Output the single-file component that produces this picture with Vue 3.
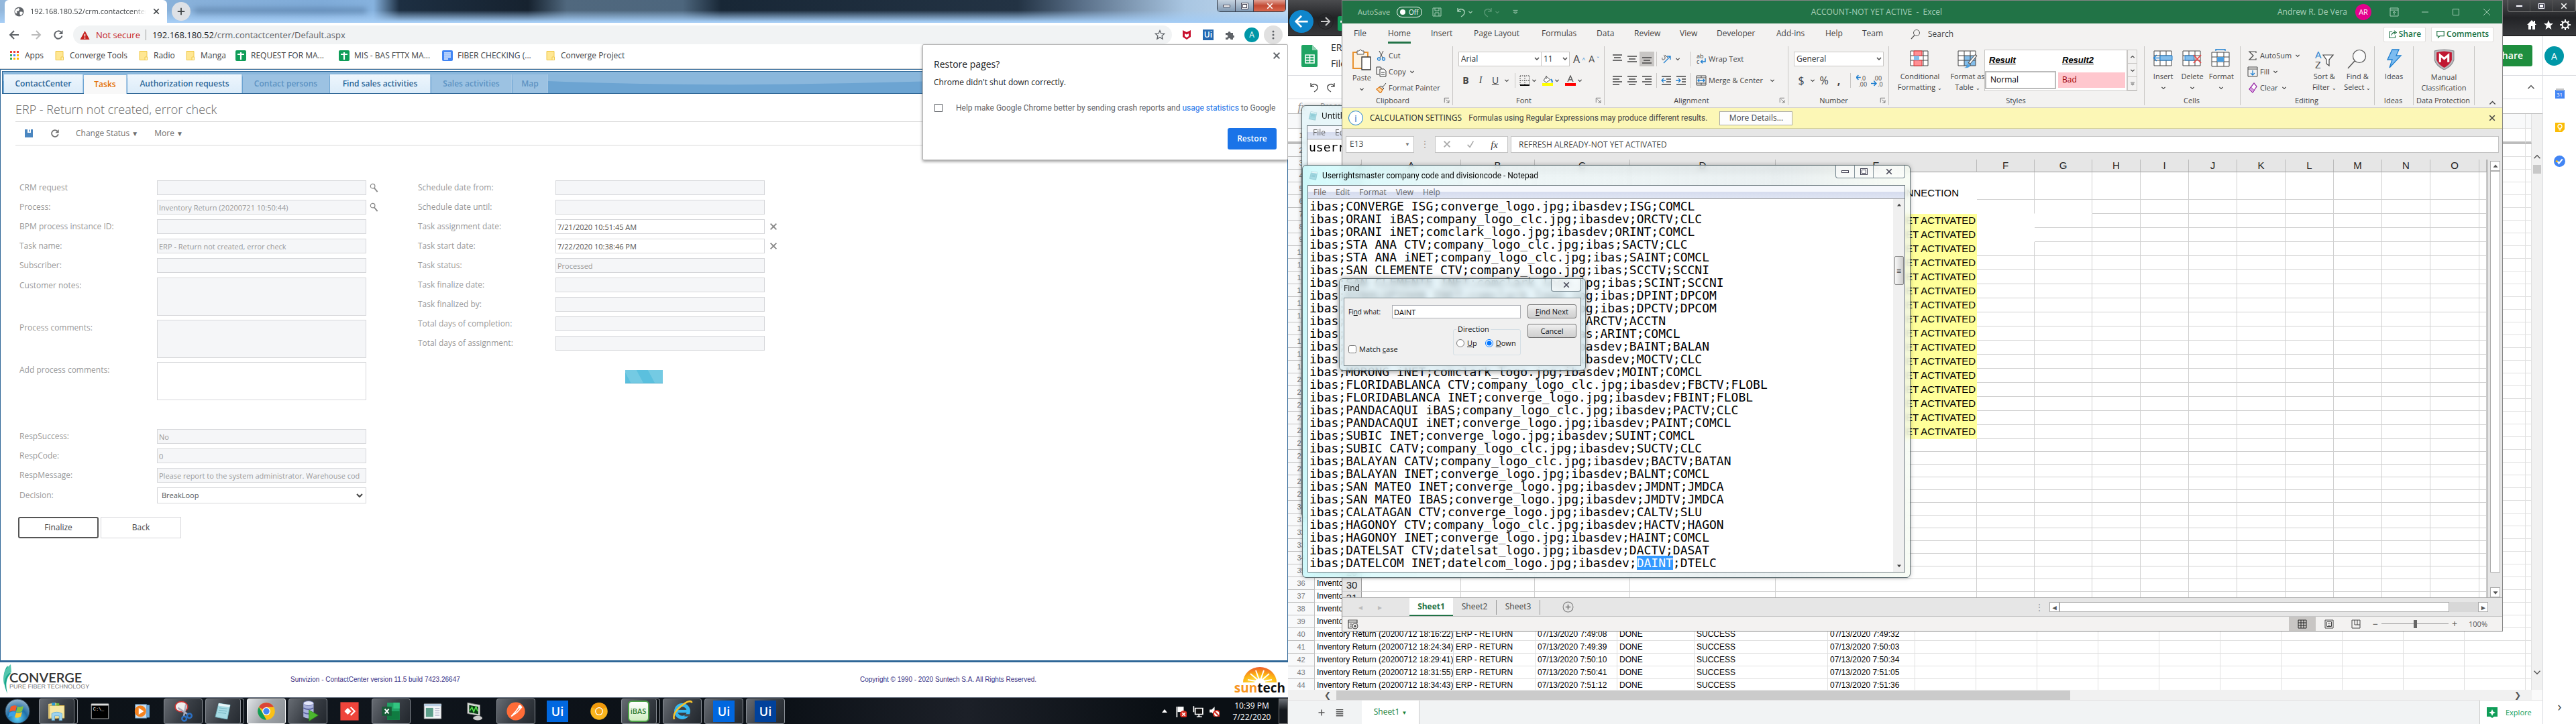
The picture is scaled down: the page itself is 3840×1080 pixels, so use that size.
<script setup>
import { h } from 'vue'

const icons = {
  globe: '<circle cx="8" cy="8" r="7.5" fill="#5f6368"/><path d="M3 4l4-2 2 2-2 3H4l1 3-2 1-2-3zM9 8l4 0 1 2-3 4-2-2z" fill="#fff"/>',
  x: '<path d="M3 3l10 10M13 3L3 13" stroke="currentColor" stroke-width="2.2" fill="none"/>',
  thinx: '<path d="M3 3l10 10M13 3L3 13" stroke="currentColor" stroke-width="1" fill="none"/>',
  plus: '<path d="M8 2v12M2 8h12" stroke="currentColor" stroke-width="2" fill="none"/>',
  back: '<path d="M15 8H2M8 2L2 8l6 6" stroke="currentColor" stroke-width="2" fill="none"/>',
  fwd: '<path d="M1 8h13M8 2l6 6-6 6" stroke="currentColor" stroke-width="2" fill="none"/>',
  reload: '<path d="M13.5 9.500A5.700 5.700 0 1 1 12 4" stroke="currentColor" stroke-width="2" fill="none"/><path d="M14.500 1v6h-6z" fill="currentColor"/>',
  warn: '<path d="M8 1l7.500 14H.5z" fill="#c5221f"/><path d="M8 6v4M8 11.500v2" stroke="#fff" stroke-width="1.600"/>',
  apps: '<g><path d="M1 1h3v3H1zM6 1h3v3H6zM11 1h3v3h-3z" fill="#ea4335"/><path d="M1 6h3v3H1z" fill="#34a853"/><path d="M6 6h3v3H6z" fill="#4285f4"/><path d="M11 6h3v3h-3zM6 11h3v3H6zM11 11h3v3h-3z" fill="#fbbc04"/><path d="M1 11h3v3H1z" fill="#34a853"/></g>',
  folder: '<path d="M2 1.500h11v13H2z" fill="#ffe793" stroke="#f0c94c"/><path d="M10 10h3.500v4.500H10z" fill="#fff0b5" stroke="#f0c94c"/>',
  gsheet: '<rect width="16" height="16" rx="2" fill="#0f9d58"/><path d="M3 6h10M8 3v11" stroke="#fff" stroke-width="2.200"/>',
  gdoc: '<rect width="16" height="16" rx="2" fill="#4285f4"/><path d="M3 4h10M3 7h10M3 10h10M3 13h6" stroke="#fff" stroke-width="1.500"/>',
  star: '<path d="M8 1.500l1.900 4.400 4.800.4-3.600 3.100 1.100 4.700L8 11.600l-4.200 2.500 1.100-4.700L1.300 6.300l4.800-.4z" fill="none" stroke="#5f6368" stroke-width="1.300"/>',
  mcafee: '<path d="M2 1l6 3 6-3v10l-6 4-6-4z" fill="#c8102e"/><path d="M5 6l3 1.500L11 6v4l-3 2-3-2z" fill="#fff"/>',
  puzzle: '<path d="M2 5h3.500a2 2 0 1 1 4 0H13v3.500a2 2 0 1 1 0 4V15H9.500a2 2 0 1 0-4 0H2v-3.500a2 2 0 1 0 0-3z" fill="#5f6368"/>',
  dots: '<g fill="#5f6368"><circle cx="8" cy="3" r="1.500"/><circle cx="8" cy="8" r="1.500"/><circle cx="8" cy="13" r="1.500"/></g>',
  save: '<path d="M2 2h12v12H2z" fill="#4a86c0"/><path d="M6 2h5v5H6z" fill="#fff"/><path d="M8.500 2.500h1.500v3H8.500z" fill="#4a86c0"/>',
  mag: '<circle cx="6" cy="5" r="3.500" fill="none" stroke="#888" stroke-width="1.300"/><path d="M8.500 8l5 6" stroke="#888" stroke-width="2"/>',
  orb: '<defs><radialGradient id="og" cx=".5" cy=".8" r=".8"><stop offset="0" stop-color="#5fd0f5"/><stop offset=".5" stop-color="#1e6fa8"/><stop offset="1" stop-color="#9ab6cc"/></radialGradient></defs><circle cx="20" cy="20" r="18" fill="url(#og)" stroke="#34495c"/><path d="M10 13q5-3 9-1l-2 8q-4-2-9 1z" fill="#f1592a"/><path d="M20 13q4 2 9-1l-2 8q-5 3-9 1z" fill="#7fc241"/><path d="M8 22q5-3 9-1l-2 7q-4-2-9 1z" fill="#3aa0e8"/><path d="M18 22q4 2 9-1l-2 7q-5 3-9 1z" fill="#fdc728"/>',
  explorer: '<path d="M6 7l12-2 4 2v26H6z" fill="#e9cf7a"/><path d="M8 10h26v22H8z" fill="#f7e7a3" stroke="#d0ac4a"/><path d="M12 5h6v5h-6z" fill="#2b9ad6"/><path d="M20 6h5v4h-5z" fill="#6cb33f"/><path d="M12 36V24q8-5 18 0v12h-5v-8h-8v8z" fill="#9ed3f0" stroke="#5fa8d0"/>',
  cmd: '<path d="M5 7h30v26H5z" fill="#000" stroke="#ccc"/><path d="M5 7h30v3H5z" fill="#ddd"/><text x="8" y="19" font-size="8" font-family="Liberation Mono" fill="#fff">C:\\_</text>',
  wmp: '<path d="M14 9h20v22H14z" fill="#6ea9d9"/><path d="M9 8h20v24H9z" fill="#c7dff2" stroke="#5c93c4"/><circle cx="18" cy="20" r="10" fill="#f5821f"/><path d="M15 14l9 6-9 6z" fill="#fff"/>',
  snip: '<ellipse cx="17" cy="12" rx="11" ry="9" fill="#eee" stroke="#c33" stroke-width="2"/><path d="M11 14l18 12M25 8l-4 22" stroke="#aab" stroke-width="3"/><circle cx="31" cy="28" r="4" fill="none" stroke="#2b6fc2" stroke-width="3"/><circle cx="22" cy="33" r="4" fill="none" stroke="#2b6fc2" stroke-width="3"/>',
  note: '<path d="M13 6l20 3-5 25-21-4z" fill="#a7dbe4" stroke="#6eaeb9"/><path d="M13 6l20 3-1 4-20-3z" fill="#e8f6f8"/><path d="M14 14l14 2M13 18l14 2M12 22l14 2" stroke="#69aebb"/>',
  chrome: '<circle cx="20" cy="20" r="15" fill="#fbc116"/><path d="M20 20L7 12.500A15 15 0 0 1 33 12.500H20z" fill="#db4437"/><path d="M7 12.500L14 24l6 11A15 15 0 0 1 7 12.500z" fill="#0f9d58"/><circle cx="20" cy="20" r="7" fill="#fff"/><circle cx="20" cy="20" r="5.500" fill="#4285f4"/>',
  db: '<path d="M12 6v24q9 5 18 0V6z" fill="#aab3dd"/><ellipse cx="21" cy="6" rx="9" ry="4" fill="#e3e7fa" stroke="#6b74ad"/><path d="M12 14q9 5 18 0M12 22q9 5 18 0" fill="none" stroke="#5a639f" stroke-width="2"/><path d="M22 18l16 9-16 10z" fill="#4cb82e" stroke="#2e8a18"/>',
  any: '<path d="M4 4h32v32H4z" fill="#ef443b"/><path d="M11 20l6-6 6 6-6 6z" fill="#fff"/><path d="M22 13l7 7-7 7" fill="none" stroke="#fff" stroke-width="2.500"/>',
  excel: '<path d="M13 5h22v30H13z" fill="#21a366"/><path d="M24 5h11v10H24z" fill="#33c481"/><path d="M13 20h22v15H13z" fill="#107c41"/><path d="M4 12h17v16H4z" fill="#185c37"/><path d="M9 16l7 8M16 16l-7 8" stroke="#fff" stroke-width="2.400"/>',
  app: '<path d="M5 7h30v26H5z" fill="#f4f6f8" stroke="#999"/><path d="M5 7h30v4H5z" fill="#b9cfe4"/><path d="M8 14h13v16H8z" fill="#5c9e8a"/><path d="M24 15h8M24 19h8M24 23h8M24 27h8" stroke="#88a"/>',
  monitor: '<path d="M8 5l22 4v19L8 24z" fill="#d8dcd8" stroke="#777"/><path d="M11 9l16 3v13l-16-3z" fill="#073b12"/><path d="M12 19l4-6 3 8 4-9 3 8" fill="none" stroke="#57e04d" stroke-width="2"/><ellipse cx="26" cy="32" rx="8" ry="4" fill="#ccc"/>',
  postman: '<circle cx="20" cy="20" r="16" fill="#ff6c37"/><path d="M12 29l8-9 7-10 3 3-8 9z" fill="none" stroke="#fff" stroke-width="2"/><circle cx="27" cy="12" r="3" fill="#fff"/>',
  canary: '<circle cx="20" cy="20" r="15" fill="#f9b51c"/><path d="M20 20L7 12.500A15 15 0 0 1 33 12.500z" fill="#f29a0c"/><circle cx="20" cy="20" r="7" fill="#fff"/><circle cx="20" cy="20" r="5.500" fill="#f2a516"/>',
  ie: '<circle cx="20" cy="20" r="11" fill="none" stroke="#35b6f0" stroke-width="6"/><path d="M10 20h21" stroke="#35b6f0" stroke-width="5"/><path d="M24 25h10v4H24z" fill="#45474d"/><path d="M6 34Q2 24 18 11T37 5" fill="none" stroke="#f7c32b" stroke-width="3"/>',
  cv: '<path d="M9 2Q-2 18 9 44Q4 22 14 14Z" fill="#18a88c"/><path d="M14 0Q0 10 4 30Q6 14 15 12Z" fill="#54c7ae"/>',
  sun: '<defs><radialGradient id="sg" cx=".5" cy="1" r="1"><stop offset="0" stop-color="#fff36b"/><stop offset=".5" stop-color="#fdb813"/><stop offset="1" stop-color="#ef5a28"/></radialGradient></defs><path d="M1 24A25 23 0 0 1 51 24Z" fill="url(#sg)"/><path d="M26 23L8 20M26 23L12 11M26 23L20 6M26 23L32 6M26 23L40 11M26 23L44 20" stroke="#fff" stroke-width="2"/><path d="M18 24a8 6 0 0 1 16 0z" fill="#fff"/>',
  flag: '<path d="M3 2v14" stroke="#fff" stroke-width="1.500"/><path d="M4 2h8v7H4z" fill="#fff"/><circle cx="12" cy="12" r="5" fill="#d82c20"/><path d="M10 10l4 4M14 10l-4 4" stroke="#fff" stroke-width="1.500"/>',
  net: '<path d="M5 4h10v8H5z" fill="#111" stroke="#fff" stroke-width="1.500"/><path d="M10 12v3M7 15.500h7M3 1v8" stroke="#fff" stroke-width="1.500"/>',
  vol: '<path d="M2 6h3l4-4v12l-4-4H2z" fill="#fff"/><circle cx="12" cy="12" r="4.500" fill="#fff" stroke="#d82c20" stroke-width="2"/><path d="M9 9l6 6" stroke="#d82c20" stroke-width="2"/>',
  caret: '<path d="M4.500 6.500L8 10l3.500-3.500" stroke="currentColor" stroke-width="1.600" fill="none"/>',
  up: '<path d="M2 11l6-6 6 6" stroke="currentColor" stroke-width="2" fill="none"/>',
  disk: '<path d="M2 2h12v12H2zM5 2v4h6V2M5 14V9h6v5" stroke="currentColor" fill="none"/>',
  undo: '<path d="M3 2v5h5M3 7q3-5 7-3t3 5q0 3-5 6" stroke="currentColor" stroke-width="1.400" fill="none"/>',
  redo: '<path d="M13 2v5H8M13 7q-3-5-7-3T3 9q0 3 5 6" stroke="currentColor" stroke-width="1.400" fill="none"/>',
  qat: '<path d="M4 5h8M5 8h6l-3 3z" stroke="currentColor" fill="none"/>',
  ribdisp: '<path d="M2 2h12v12H2zM2 5h12M8 12V7M6 9l2-2 2 2" stroke="currentColor" fill="none"/>',
  min: '<path d="M3 8h10" stroke="currentColor" fill="none"/>',
  max: '<path d="M3.500 3.500h9v9h-9z" stroke="currentColor" fill="none"/>',
  search: '<circle cx="10" cy="6" r="4.500" fill="none" stroke="#555"/><path d="M7 9.500L2 15" stroke="#555" stroke-width="1.300"/>',
  share: '<path d="M7 4H2v10h10v-4M6 10q0-5 6-5M10 2l4 3-4 3" stroke="#217346" stroke-width="1.300" fill="none"/>',
  comment: '<path d="M2 3h12v8H7l-3 3v-3H2z" stroke="#217346" stroke-width="1.300" fill="none"/>',
  paste: '<path d="M2 5h22v24H2z" fill="#fdf3e3" stroke="#e8912d" stroke-width="2"/><path d="M8 3h3q2-4 4 0h3v5H8z" fill="#fff" stroke="#555"/><path d="M15 12h13v19H15z" fill="#fff" stroke="#333" stroke-width="1.300"/>',
  cut: '<path d="M5 1l5 10M11 1L6 11" stroke="#444" fill="none"/><circle cx="4.500" cy="13" r="2" fill="none" stroke="#1e7fd0" stroke-width="1.300"/><circle cx="11.500" cy="13" r="2" fill="none" stroke="#1e7fd0" stroke-width="1.300"/>',
  copy: '<path d="M5 12H1V1h6l2 2" stroke="#333" fill="none"/><path d="M6 4h6l3 3v8H6zM8 9h5M8 12h5" stroke="#333" fill="#fff"/>',
  painter: '<path d="M15 1l-5 6M8 5l4 4-2 2-5-4z" stroke="#444" fill="#ddd"/><path d="M5 7l5 4-3 5-6-6z" fill="#fbd9a8" stroke="#e07b1a" stroke-width="1.300"/>',
  launch: '<path d="M3 12V3h9M6 6l6 6M12 7v5H7" stroke="#555" fill="none"/>',
  border: '<path d="M1 1h14v14H1zM8 1v14M1 8h14" stroke="#333" stroke-dasharray="1.500 1.500" fill="none"/><path d="M1 15h14" stroke="#000" stroke-width="2"/>',
  bucket: '<path d="M6 2l6 5-6 4-4-3zM6 1v5" stroke="#555" fill="#fff"/><path d="M13 6q3 4 1 5" stroke="#1e7fd0" stroke-width="2" fill="none"/><path d="M0 12h16v4H0z" fill="#ff0"/>',
  fontc: '<path d="M4 10L8 1l4 9M5.500 7h5" stroke="#555" stroke-width="1.300" fill="none"/><path d="M0 12h16v4H0z" fill="#f00"/>',
  alt: '<path d="M1 2h14M3 6h10M1 10h14" stroke="#444" stroke-width="1.300"/>',
  alm: '<path d="M1 4h14M3 8h10M1 12h14" stroke="#444" stroke-width="1.300"/>',
  alb: '<path d="M1 6h14M3 10h10M1 14h14" stroke="#444" stroke-width="1.300"/>',
  tl: '<path d="M1 2h14M1 6h10M1 10h14M1 14h10" stroke="#444" stroke-width="1.300"/>',
  tc: '<path d="M1 2h14M3 6h10M1 10h14M3 14h10" stroke="#444" stroke-width="1.300"/>',
  tr: '<path d="M1 2h14M5 6h10M1 10h14M5 14h10" stroke="#444" stroke-width="1.300"/>',
  orient: '<path d="M4 14L14 4M9 4h5v5" stroke="#1e7fd0" stroke-width="1.300" fill="none"/><path d="M2 6q-1 4 2 3t2-4-2-3M6 2l4 4" stroke="#555" fill="none"/>',
  ind: '<path d="M1 2h14M8 6h7M8 10h7M1 14h14" stroke="#444" stroke-width="1.300"/><path d="M7 8H1M4 5L1 8l3 3" stroke="#1e7fd0" stroke-width="1.300" fill="none"/>',
  ind2: '<path d="M1 2h14M9 6h6M9 10h6M1 14h14" stroke="#444" stroke-width="1.300"/><path d="M0 8h7M4 5l3 3-3 3" stroke="#1e7fd0" stroke-width="1.300" fill="none"/>',
  wrap: '<text x="1" y="7" font-size="9" font-family="Open Sans" fill="#444">ab</text><text x="1" y="15" font-size="9" font-family="Open Sans" fill="#444">c</text><path d="M14 7v5H8M10 9.500L7.500 12l2.500 2.500" stroke="#1e7fd0" stroke-width="1.500" fill="none"/>',
  merge: '<path d="M1 1h14v14H1zM1 4h14M1 12h14M8 1v3M8 12v3" stroke="#444" fill="none"/><path d="M3 8h10M5 6L3 8l2 2M11 6l2 2-2 2" stroke="#1e7fd0" stroke-width="1.400" fill="none"/>',
  dec: '<text x="6" y="8" font-size="8" font-family="Open Sans" fill="#444">.0</text><text x="3" y="16" font-size="8" font-family="Open Sans" fill="#444">.00</text><path d="M6 4H0M3 1L0 4l3 3" stroke="#1e7fd0" stroke-width="1.400" fill="none"/>',
  dec2: '<text x="3" y="8" font-size="8" font-family="Open Sans" fill="#444">.00</text><text x="9" y="16" font-size="8" font-family="Open Sans" fill="#444">.0</text><path d="M0 12h7M4 9l3 3-3 3" stroke="#1e7fd0" stroke-width="1.400" fill="none"/>',
  cond: '<path d="M1 3h26v22H1zM1 10h26M1 17h26M9 3v22M20 3v22" stroke="#444" fill="#fff"/><path d="M6 3h12v7H6zM6 17h12v8H6z" fill="#ff8f94" stroke="#d33"/><path d="M6 10h8v7H6z" fill="#83bdea"/>',
  ftab: '<path d="M1 3h26v22H1z" fill="#fff"/><path d="M10 10h17v15H10z" fill="#83bdea"/><path d="M1 3h26v22H1zM1 10h26M1 17h26M10 3v22M19 3v22" stroke="#444" fill="none"/><path d="M28 9L17 22" stroke="#555" stroke-width="4"/><path d="M27 10L18 21" stroke="#fff" stroke-width="2"/><path d="M9 28q5 0 5-5l5 1q0 5-10 4z" fill="#4b9fe0"/>',
  cins: '<path d="M1 3h26v22H1zM1 10h26M1 17h26M10 3v22M19 3v22" stroke="#444" fill="#fff"/><path d="M10 10h18v7H10z" fill="#83bdea" stroke="#1e7fd0"/><path d="M9 13.500H0M5 9l-4.500 4.500L5 18" stroke="#1e7fd0" stroke-width="1.500" fill="none"/>',
  cdel: '<path d="M1 3h26v22H1zM1 10h26M1 17h26M10 3v22M19 3v22" stroke="#444" fill="#fff"/><path d="M4 10h13v7H4z" fill="#83bdea" stroke="#1e7fd0"/><path d="M17 9l11 12M28 9L17 21" stroke="#e8484a" stroke-width="1.800"/>',
  cfmt: '<path d="M1 5h26v21H1zM1 12h26M1 19h26M9 5v21M19 5v21" stroke="#444" fill="#fff"/><path d="M9 12h10v7H9z" fill="#4b9fe0"/><path d="M7 1h14M7 0v3M21 0v3" stroke="#1e7fd0" stroke-width="1.300"/>',
  sigma: '<path d="M13 4V2H3l6 6-6 6h10v-2" stroke="#444" stroke-width="1.200" fill="none"/>',
  fill: '<path d="M1 1h14v14H1zM1 4h14" stroke="#444" fill="none"/><path d="M8 6v7M5 10l3 3 3-3" stroke="#1e7fd0" stroke-width="1.300" fill="none"/>',
  clear: '<path d="M10 1l4 5-6 9-5-5z" fill="#fff" stroke="#9b30a8" stroke-width="1.300"/><path d="M5.500 7l5 5-2.500 3-5-5z" fill="#d9a0e0" stroke="#9b30a8"/>',
  sort: '<text x="1" y="14" font-size="15" font-family="Open Sans" fill="#1e7fd0">A</text><text x="1" y="29" font-size="15" font-family="Open Sans" fill="#444">Z</text><path d="M13 9h15l-6 7v9l-4-3v-6z" fill="#fff" stroke="#444" stroke-width="1.200"/>',
  find: '<circle cx="18" cy="11" r="9.500" fill="#fafafa" stroke="#555" stroke-width="1.200"/><path d="M11 18L1 29" stroke="#555" stroke-width="1.500"/>',
  idea: '<path d="M12 1h10l-4 9h7L8 28l4-12H5z" fill="#7dbcf0" stroke="#1e7fd0" stroke-width="1.300"/>',
  shield: '<path d="M1 3q14-4 28 0v13q-3 9-14 14Q4 25 1 16z" fill="#b8b8bc" stroke="#8a8a8e"/><path d="M4 5q11-3 22 0v11q-3 7-11 11Q7 23 4 16z" fill="#c01832"/><path d="M9 19V9l6 5 6-5v10" fill="none" stroke="#fff" stroke-width="3"/>',
  fx: '<text x="2" y="13" font-size="14" font-style="italic" font-family="Liberation Serif" fill="currentColor">fx</text>',
  check: '<path d="M3 9l4 4 6-10" stroke="currentColor" stroke-width="1.800" fill="none"/>',
  addc: '<circle cx="8" cy="8" r="7" fill="none" stroke="#777"/><path d="M8 4.500v7M4.500 8h7" stroke="#777" stroke-width="1.500"/>',
  rec: '<path d="M1 2h13v5M1 2v12h6M1 5h13M3 8h4M3 11h3" stroke="#444" stroke-width="1.200" fill="none"/><circle cx="11" cy="11" r="4" fill="none" stroke="#444"/><circle cx="11" cy="11" r="1.700" fill="#444"/>',
  vgrid: '<path d="M2 2h12v12H2zM6 2v12M10 2v12M2 6h12M2 10h12" stroke="#222" fill="none"/>',
  vpage: '<path d="M2 2h12v12H2zM4.500 4.500h7v7h-7zM6 6.500h4M6 9.500h4" stroke="#444" fill="none"/>',
  vbreak: '<path d="M2 2h12v12H2zM6 2v7h8M10 2v7" stroke="#444" fill="none"/>',
  tri: '<path d="M4 10l4-5 4 5z" fill="currentColor"/>',
  home: '<path d="M8 1L1 8h2v7h4v-5h2v5h4V8h2l-2-2V2h-2v2z" fill="#fff"/>',
  fstar: '<path d="M8 1l2 5h5l-4 3.500 1.500 5.500L8 12l-4.500 3L5 9.500 1 6h5z" fill="#fff"/>',
  gear: '<circle cx="8" cy="8" r="4.500" fill="none" stroke="#fff" stroke-width="2"/><path d="M8 0v3M8 13v3M0 8h3M13 8h3M2.500 2.500l2 2M11.500 11.500l2 2M13.500 2.500l-2 2M4.500 11.500l-2 2" stroke="#fff" stroke-width="2"/>',
  sheets: '<path d="M2 0h14l8 8v23q0 2-2 2H2q-2 0-2-2V2q0-2 2-2z" fill="#1fa463"/><path d="M16 0l8 8h-8z" fill="#8ed1b1"/><path d="M6 15h13v12H6zM6 19h13M6 23h13M12.500 15v12" fill="none" stroke="#fff" stroke-width="1.600"/>',
  cal: '<path d="M1 2h14v13H1z" fill="#4285f4"/><path d="M2 0h12v3H2z" fill="#c6c6c6"/><text x="3" y="12" font-size="8" font-family="Open Sans" fill="#fff">31</text>',
  keep: '<path d="M1 1h14v10l-4 4H1z" fill="#fbbc04"/><circle cx="8" cy="6.500" r="3" fill="none" stroke="#fff" stroke-width="1.300"/><path d="M6.500 11h3v1.500h-3z" fill="#fff"/>',
  task: '<circle cx="8" cy="8" r="8" fill="#4285f4"/><path d="M5 8l2 3 5-6" fill="none" stroke="#fff" stroke-width="2"/><circle cx="4" cy="8" r="1.500" fill="#fbbc04"/>',
  explore: '<path d="M0 0h16v14h-5l-3 2-3-2H0z" fill="#0f9d58"/><path d="M8 3l1.500 3.500L13 8 9.500 9.500 8 13 6.500 9.500 3 8l3.500-1.500z" fill="#fff"/>',
  list: '<path d="M2 3h12M2 6.500h12M2 10h12M2 13.500h12" stroke="#555" stroke-width="1.600"/>',
}
const Ico = (p) => h('svg', {
  width: p.w || 16, height: p.t || p.w || 16,
  viewBox: p.vb || '0 0 16 16', 'aria-hidden': 'true',
  innerHTML: icons[p.n],
})

const bookmarks = [
  ['folder', 'Converge Tools', 125], ['folder', 'Radio', 70], ['folder', 'Manga', 75],
  ['gsheet', 'REQUEST FOR MA...', 154], ['gsheet', 'MIS - BAS FTTX MA...', 154],
  ['gdoc', 'FIBER CHECKING (...', 154], ['folder', 'Converge Project', 140],
]
const crmTabs = [
  ['ContactCenter', 118, ''], ['Tasks', 64, 'active'], ['Authorization requests', 171, ''],
  ['Contact persons', 129, 'off'], ['Find sales activities', 150, ''], ['Sales activities', 120, 'off'], ['Map', 53, 'off'],
]
const leftFields = [
  { l: 'CRM request', v: '', look: true }, { l: 'Process:', v: 'Inventory Return (20200721 10:50:44)', look: true },
  { l: 'BPM process instance ID:', v: '' }, { l: 'Task name:', v: 'ERP - Return not created, error check' }, { l: 'Subscriber:', v: '' },
]
const notes = [['Customer notes:', true], ['Process comments:', true], ['Add process comments:', false]]
const resp = [['RespSuccess:', 'No'], ['RespCode:', '0'], ['RespMessage:', 'Please report to the system administrator. Warehouse cod']]
const rightFields = [
  { l: 'Schedule date from:', v: '' }, { l: 'Schedule date until:', v: '' },
  { l: 'Task assignment date:', v: '7/21/2020 10:51:45 AM', edit: true }, { l: 'Task start date:', v: '7/22/2020 10:38:46 PM', edit: true },
  { l: 'Task status:', v: 'Processed' }, { l: 'Task finalize date:', v: '' }, { l: 'Task finalized by:', v: '' },
  { l: 'Total days of completion:', v: '' }, { l: 'Total days of assignment:', v: '' },
]
const tasks = [
  ['explorer', 'stack'], ['cmd', ''], ['wmp', ''], ['snip', 'open'], ['note', 'stack'], ['chrome', 'open front'],
  ['db', 'open'], ['any', ''], ['excel', 'open'], ['app', ''], ['monitor', ''], ['postman', 'open'], ['ui', ''],
  ['canary', ''], ['ibas', 'stack'], ['ie', 'open'], ['ui', 'open'], ['ui2', 'open'],
]
const ribbonTabs = [['File', 51], ['Home', 64], ['Insert', 64], ['Page Layout', 101], ['Formulas', 82], ['Data', 56], ['Review', 68], ['View', 55], ['Developer', 89], ['Add-ins', 73], ['Help', 55], ['Team', 72]]
const cols = [['A', 148], ['B', 110], ['C', 142], ['D', 217], ['E', 300], ['F', 86], ['G', 86], ['H', 72], ['I', 72], ['J', 72], ['K', 72], ['L', 72], ['M', 72], ['N', 72], ['O', 73]]
const xlRows = Array.from({ length: 31 }, (_, i) => i + 1)
const sheetCols = [207, 122, 122, 115, 199, 130, 91, 91, 91, 91, 91, 91, 91, 91, 91, 91]
const stamps = {
  35: ['18:01:10', '7:47:02', '7:47:25'], 36: ['18:03:14', '7:47:31', '7:47:50'], 37: ['18:06:35', '7:47:56', '7:48:12'],
  38: ['18:09:51', '7:48:20', '7:48:41'], 39: ['18:12:02', '7:48:47', '7:49:02'], 40: ['18:16:22', '7:49:08', '7:49:32'],
  41: ['18:24:34', '7:49:39', '7:50:03'], 42: ['18:29:41', '7:50:10', '7:50:34'], 43: ['18:31:55', '7:50:41', '7:51:05'], 44: ['18:34:43', '7:51:12', '7:51:36'],
}
const sheetRows = Array.from({ length: 43 }, (_, i) => {
  const n = i + 2
  const s = stamps[n]
  return { n, c: s ? [`Inventory Return (20200712 ${s[0]})`, 'ERP - RETURN', `07/13/2020 ${s[1]}`, 'DONE', 'SUCCESS', `07/13/2020 ${s[2]}`] : ['', '', '', '', '', ''] }
})
const lines = `CONVERGE ISG;converge_logo.jpg;ibasdev;ISG;COMCL
ORANI iBAS;company_logo_clc.jpg;ibasdev;ORCTV;CLC
ORANI iNET;comclark_logo.jpg;ibasdev;ORINT;COMCL
STA ANA CTV;company_logo_clc.jpg;ibas;SACTV;CLC
STA ANA iNET;company_logo_clc.jpg;ibas;SAINT;COMCL
SAN CLEMENTE CTV;company_logo.jpg;ibas;SCCTV;SCCNI
SAN CLEMENTE INET;comclark_logo.jpg;ibas;SCINT;SCCNI
DINALUPIHAN INET;comclark_logo.jpg;ibas;DPINT;DPCOM
DINALUPIHAN iBAS;comclark_logo.jpg;ibas;DPCTV;DPCOM
ARAYAT CTV;company_logo.jpg;ibas;ARCTV;ACCTN
ARAYAT INET;comclark_logo.jpg;ibas;ARINT;COMCL
BALANGA INET;comclark_logo.jpg;ibasdev;BAINT;BALAN
MORONG CTV;company_logo_clc.jpg;ibasdev;MOCTV;CLC
MORONG iNET;comclark_logo.jpg;ibasdev;MOINT;COMCL
FLORIDABLANCA CTV;company_logo_clc.jpg;ibasdev;FBCTV;FLOBL
FLORIDABLANCA INET;converge_logo.jpg;ibasdev;FBINT;FLOBL
PANDACAQUI iBAS;company_logo_clc.jpg;ibasdev;PACTV;CLC
PANDACAQUI iNET;converge_logo.jpg;ibasdev;PAINT;COMCL
SUBIC INET;converge_logo.jpg;ibasdev;SUINT;COMCL
SUBIC CATV;company_logo_clc.jpg;ibasdev;SUCTV;CLC
BALAYAN CATV;company_logo_clc.jpg;ibasdev;BACTV;BATAN
BALAYAN INET;converge_logo.jpg;ibasdev;BALNT;COMCL
SAN MATEO INET;converge_logo.jpg;ibasdev;JMDNT;JMDCA
SAN MATEO IBAS;converge_logo.jpg;ibasdev;JMDTV;JMDCA
CALATAGAN CTV;converge_logo.jpg;ibasdev;CALTV;SLU
HAGONOY CTV;company_logo_clc.jpg;ibasdev;HACTV;HAGON
HAGONOY INET;converge_logo.jpg;ibasdev;HAINT;COMCL
DATELSAT CTV;datelsat_logo.jpg;ibasdev;DACTV;DASAT`.split('\n')
</script>

<template>
  <div class="desk">
    <section class="screen left">
      <div class="tabstrip">
        <div class="ctab"><Ico n="globe" :w="15" /><span>192.168.180.52/crm.contactcenter</span><button aria-label="Close tab"><Ico n="x" :w="12" /></button></div>
        <button class="newtab" aria-label="New tab"><Ico n="plus" :w="14" /></button>
        <i class="smudge"></i>
        <div class="wctl"><button aria-label="Minimize"><i class="wmin"></i></button><button aria-label="Restore down"><i class="wmax"></i></button><button class="red" aria-label="Close"><Ico n="x" :w="12" /></button></div>
      </div>
      <div class="toolbar">
        <button aria-label="Back"><Ico n="back" /></button><button class="dim" aria-label="Forward"><Ico n="fwd" /></button><button aria-label="Reload"><Ico n="reload" /></button>
        <div class="omni"><Ico n="warn" :w="15" /><span class="ns">Not secure</span><span class="url"><b>192.168.180.52</b>/crm.contactcenter/Default.aspx</span><Ico n="star" /></div>
        <div class="exts"><Ico n="mcafee" /><span class="uib">Ui</span><Ico n="puzzle" /><span class="av">A</span><button class="menu" aria-label="Menu"><Ico n="dots" /></button></div>
      </div>
      <nav class="marks">
        <a href="#" class="apps"><Ico n="apps" />Apps</a>
        <a v-for="b in bookmarks" :key="b[1]" href="#" :style="{ width: b[2] + 'px' }"><Ico :n="b[0]" />{{ b[1] }}</a>
      </nav>
      <main class="crm">
        <nav class="crmtabs">
          <svg class="wave" viewBox="0 0 1900 32" preserveAspectRatio="none" aria-hidden="true"><path d="M0 14Q500 0 760 12T1300 16T1900 10V32H0Z" fill="#6ca4d2" /></svg>
          <a v-for="t in crmTabs" :key="t[0]" href="#" :class="t[2]" :style="{ width: t[1] + 'px' }">{{ t[0] }}</a>
        </nav>
        <h1>ERP - Return not created, error check</h1>
        <div class="crmbar"><button aria-label="Save"><Ico n="save" /></button><button aria-label="Refresh"><Ico n="reload" :w="14" /></button><button>Change Status <small>▼</small></button><button>More <small>▼</small></button></div>
        <form class="form" @submit.prevent>
          <div class="fcol">
            <div v-for="(f, i) in leftFields" :key="f.l" class="fr"><label :for="'l' + i">{{ f.l }}</label><input :id="'l' + i" :value="f.v" readonly><Ico v-if="f.look" n="mag" :w="15" /></div>
            <div v-for="(f, i) in notes" :key="f[0]" class="fr tall"><label :for="'n' + i">{{ f[0] }}</label><textarea :id="'n' + i" :class="{ edit: !f[1] }"></textarea></div>
            <div v-for="(f, i) in resp" :key="f[0]" class="fr" :class="{ first: i === 0 }"><label :for="'r' + i">{{ f[0] }}</label><input :id="'r' + i" :value="f[1]" readonly></div>
            <div class="fr"><label for="dec">Decision:</label><select id="dec"><option>BreakLoop</option></select></div>
            <div class="acts"><button class="def">Finalize</button><button>Back</button></div>
          </div>
          <div class="fcol second">
            <div v-for="(f, i) in rightFields" :key="f.l" class="fr"><label :for="'s' + i">{{ f.l }}</label><input :id="'s' + i" :value="f.v" :class="{ edit: f.edit }" readonly><button v-if="f.edit" class="clr" type="button" aria-label="Clear"><Ico n="x" :w="14" /></button></div>
            <div class="loader"></div>
          </div>
        </form>
      </main>
      <footer class="foot">
        <div class="cv"><Ico n="cv" :w="16" :t="46" vb="0 0 16 46" /><div><b>CONVERGE</b><small>PURE FIBER TECHNOLOGY</small></div></div>
        <span class="ver">Sunvizion - ContactCenter version 11.5 build 7423.26647</span>
        <span class="cpy">Copyright © 1990 - 2020 Suntech S.A. All Rights Reserved.</span>
        <div class="sun"><Ico n="sun" :w="52" :t="24" vb="0 0 52 24" /><b><i>sun</i>tech</b></div>
      </footer>
      <div class="taskbar">
        <button class="orb" aria-label="Start"><Ico n="orb" :w="40" vb="0 0 40 40" /></button>
        <button v-for="(t, i) in tasks" :key="i" class="tb" :class="t[1]" :aria-label="t[0]">
          <span v-if="t[0] === 'ui' || t[0] === 'ui2'" class="uibig" :class="t[0]">Ui</span>
          <span v-else-if="t[0] === 'ibas'" class="ibas">iBAS</span>
          <Ico v-else :n="t[0]" :w="34" vb="0 0 40 40" />
        </button>
        <div class="tray"><Ico n="tri" /><Ico n="flag" :w="18" /><Ico n="net" :w="18" /><Ico n="vol" :w="17" /><div class="clock">10:39 PM<br>7/22/2020</div><i class="peek"></i></div>
      </div>
      <aside class="restore">
        <button class="rx" aria-label="Dismiss"><Ico n="x" :w="14" /></button>
        <h2>Restore pages?</h2>
        <p>Chrome didn't shut down correctly.</p>
        <label><input type="checkbox"><span>Help make Google Chrome better by sending crash reports and <a href="#">usage statistics</a> to Google</span></label>
        <button class="rb">Restore</button>
      </aside>
    </section>

    <section class="screen right">
      <div class="iebar"><button class="ieb" aria-label="Back"><Ico n="back" :w="22" /></button><button class="ief" aria-label="Forward"><Ico n="fwd" /></button><Ico n="gsheet" :w="22" />
        <div class="ier"><div class="iew"><button aria-label="Minimize"><i class="wmin"></i></button><button aria-label="Restore"><i class="wmax"></i></button><button aria-label="Close"><Ico n="x" :w="12" /></button></div><div class="iei"><Ico n="home" /><Ico n="fstar" /><Ico n="gear" /></div></div>
      </div>
      <div class="docs">
        <div class="docmain">
          <header class="dochead"><Ico n="sheets" :w="24" :t="33" vb="0 0 24 33" /><div class="dt"><span>ERP</span><a href="#">File</a></div><button class="dshare">Share</button><span class="av big">A</span></header>
          <div class="doctools"><Ico n="undo" /><Ico n="redo" /><Ico n="up" :w="12" class="end" /></div>
          <div class="docfx"><Ico n="fx" :w="20" /><span>Process</span></div>
          <div class="docgrid">
            <div class="gwrap">
              <table>
                <colgroup><col style="width: 40px"><col v-for="(w, i) in sheetCols" :key="i" :style="{ width: w + 'px' }"><col></colgroup>
                <thead><tr><th></th><td v-for="i in 17" :key="i"></td></tr><tr class="frz"><th>1</th><td v-for="i in 17" :key="i"></td></tr></thead>
                <tbody><tr v-for="r in sheetRows" :key="r.n"><th>{{ r.n }}</th><td v-for="(c, i) in r.c" :key="i">{{ c }}</td><td v-for="i in 11" :key="'e' + i"></td></tr></tbody>
              </table>
            </div>
            <div class="vs"><Ico n="up" :w="12" /><i></i><Ico n="up" :w="12" class="flip" /></div>
          </div>
          <div class="hs"><span class="chev">❮</span><i></i><span class="chev r">❯</span></div>
          <div class="docfoot"><Ico n="plus" :w="12" /><Ico n="list" :w="14" /><a href="#">Sheet1 <small>▼</small></a><button class="expl"><Ico n="explore" />Explore</button></div>
        </div>
        <div class="side"><Ico n="cal" /><Ico n="keep" /><Ico n="task" :w="17" /><span>›</span></div>
      </div>

      <div class="np under"><div class="npt"><Ico n="note" :w="18" vb="0 0 40 40" /><span>Untitled - Notepad</span></div>
        <div class="npin"><div class="npm"><span>File</span><span>Edit</span></div><div class="nptext">userrightsmaster</div></div></div>

      <div class="xl">
        <header class="xlt">
          <span class="as">AutoSave</span><label class="tog"><input type="checkbox" aria-label="AutoSave"><i></i>Off</label>
          <Ico n="disk" /><span class="pair"><Ico n="undo" /><Ico n="caret" :w="12" /></span><span class="pair faint"><Ico n="redo" /><Ico n="caret" :w="12" /></span><Ico n="qat" :w="14" />
          <span class="ttl">ACCOUNT-NOT YET ACTIVE &nbsp;-&nbsp; Excel</span>
          <div class="xlu"><span>Andrew R. De Vera</span><b>AR</b><Ico n="ribdisp" /><Ico n="min" /><Ico n="max" /><Ico n="thinx" /></div>
        </header>
        <nav class="xltabs">
          <a v-for="t in ribbonTabs" :key="t[0]" href="#" :class="{ on: t[0] === 'Home' }" :style="{ width: t[1] + 'px' }"><span>{{ t[0] }}</span></a>
          <Ico n="search" /><span class="sr">Search</span>
          <div class="sc"><button><Ico n="share" :w="14" />Share</button><button><Ico n="comment" :w="14" />Comments</button></div>
        </nav>
        <div class="rib">
          <div class="g clip"><div class="body"><button class="bigb"><Ico n="paste" :w="30" :t="32" vb="0 0 30 32" /><span>Paste</span><Ico n="caret" :w="12" /></button>
            <div class="stk"><button><Ico n="cut" />Cut</button><button><Ico n="copy" />Copy <Ico n="caret" :w="12" /></button><button><Ico n="painter" />Format Painter</button></div></div>
            <div class="gl"><span>Clipboard</span><Ico n="launch" :w="12" /></div></div>
          <div class="g font"><div class="body colm">
            <div class="row"><select aria-label="Font"><option>Arial</option></select><select aria-label="Size" class="sz"><option>11</option></select><button class="big1">A<sup>^</sup></button><button class="big2">A<sup>ˇ</sup></button></div>
            <div class="row"><button class="tx"><b>B</b></button><button class="tx"><i class="se">I</i></button><button class="tx"><u>U</u></button><Ico n="caret" :w="12" /><i class="sep"></i><Ico n="border" /><Ico n="caret" :w="12" /><i class="gap"></i><Ico n="bucket" /><Ico n="caret" :w="12" /><i class="gap"></i><Ico n="fontc" /><Ico n="caret" :w="12" /></div></div>
            <div class="gl"><span>Font</span><Ico n="launch" :w="12" /></div></div>
          <div class="g align"><div class="body colm">
            <div class="row"><span class="ib"><Ico n="alt" /></span><span class="ib"><Ico n="alm" /></span><span class="ib hi"><Ico n="alb" /></span><i class="sep"></i><span class="ib"><Ico n="orient" /></span><Ico n="caret" :w="12" /><i class="sep far"></i><button><Ico n="wrap" />Wrap Text</button></div>
            <div class="row"><span class="ib"><Ico n="tl" /></span><span class="ib"><Ico n="tc" /></span><span class="ib"><Ico n="tr" /></span><i class="sep"></i><span class="ib"><Ico n="ind" /></span><span class="ib"><Ico n="ind2" /></span><i class="sep"></i><button><Ico n="merge" />Merge &amp; Center</button><Ico n="caret" :w="12" class="mc" /></div></div>
            <div class="gl"><span>Alignment</span><Ico n="launch" :w="12" /></div></div>
          <div class="g num"><div class="body colm">
            <div class="row"><select aria-label="Number format"><option>General</option></select></div>
            <div class="row"><span class="ib dl">$</span><Ico n="caret" :w="12" /><span class="ib dl">%</span><span class="ib dl"><b>,</b></span><i class="sep"></i><span class="ib"><Ico n="dec" :w="18" /></span><span class="ib"><Ico n="dec2" :w="18" /></span></div></div>
            <div class="gl"><span>Number</span><Ico n="launch" :w="12" /></div></div>
          <div class="g styl"><div class="body"><button class="bigb wide"><Ico n="cond" :w="30" vb="0 0 30 30" /><span>Conditional<br>Formatting <small>⌄</small></span></button><button class="bigb wide2"><Ico n="ftab" :w="30" vb="0 0 30 30" /><span>Format as<br>Table <small>⌄</small></span></button>
            <div class="gal"><span class="res">Result</span><span class="res">Result2</span><span class="nor">Normal</span><span class="bad">Bad</span></div><div class="gsc"><i><Ico n="caret" :w="12" class="flip" /></i><i><Ico n="caret" :w="12" /></i><i><Ico n="qat" :w="12" /></i></div></div>
            <div class="gl"><span>Styles</span></div></div>
          <div class="g cell"><div class="body"><button class="bigb"><Ico n="cins" :w="30" vb="0 0 30 30" /><span>Insert</span><Ico n="caret" :w="12" /></button><button class="bigb"><Ico n="cdel" :w="30" vb="0 0 30 30" /><span>Delete</span><Ico n="caret" :w="12" /></button><button class="bigb"><Ico n="cfmt" :w="30" vb="0 0 30 30" /><span>Format</span><Ico n="caret" :w="12" /></button></div>
            <div class="gl"><span>Cells</span></div></div>
          <div class="g edit"><div class="body"><div class="stk"><button><Ico n="sigma" />AutoSum <Ico n="caret" :w="12" /></button><button><Ico n="fill" />Fill<Ico n="caret" :w="12" /></button><button><Ico n="clear" />Clear<Ico n="caret" :w="12" /></button></div>
            <button class="bigb"><Ico n="sort" :w="30" vb="0 0 30 30" /><span>Sort &amp;<br>Filter <small>⌄</small></span></button><button class="bigb"><Ico n="find" :w="30" vb="0 0 30 30" /><span>Find &amp;<br>Select <small>⌄</small></span></button></div>
            <div class="gl"><span>Editing</span></div></div>
          <div class="g idea"><div class="body"><button class="bigb"><Ico n="idea" :w="30" vb="0 0 30 30" /><span>Ideas</span></button></div><div class="gl"><span>Ideas</span></div></div>
          <div class="g prot"><div class="body"><button class="bigb"><Ico n="shield" :w="31" vb="0 0 30 30" /><span>Manual<br>Classification</span></button></div><div class="gl"><span>Data Protection</span></div></div>
          <Ico n="up" :w="11" class="coll" />
        </div>
        <div class="msg"><span class="info">i</span><b>CALCULATION SETTINGS</b><span class="expr">Formulas using Regular Expressions may produce different results.</span><button>More Details...</button><Ico n="x" :w="12" class="end" /></div>
        <div class="fbar"><div class="nm"><span>E13</span><small>▼</small></div><span class="vd">⋮</span><div class="fxs"><Ico n="x" :w="14" /><Ico n="check" :w="14" /><Ico n="fx" :w="17" /></div><input aria-label="Formula" value="REFRESH ALREADY-NOT YET ACTIVATED"></div>
        <div class="xg">
          <div class="xw">
            <table>
              <colgroup><col style="width: 29px"><col v-for="c in cols" :key="c[0]" :style="{ width: c[1] + 'px' }"><col></colgroup>
              <thead><tr><th class="corner">◢</th><th v-for="c in cols" :key="c[0]">{{ c[0] }}</th><th></th></tr></thead>
              <tbody><tr v-for="r in xlRows" :key="r" :class="{ r1: r === 1, r2: r === 2, yel: r > 2 && r < 19, sp: r === 3 || r === 4 }"><th>{{ r }}</th>
                <td v-for="c in cols" :key="c[0]" :class="'c' + c[0]"><template v-if="c[0] === 'E' && r === 1">CONNECTION</template><template v-if="c[0] === 'E' && r > 2 && r < 19">REFRESH ALREADY-NOT YET ACTIVATED</template></td><td></td></tr></tbody>
            </table>
          </div>
          <div class="xvs"><b><Ico n="tri" :w="14" /></b><i></i><b><Ico n="tri" :w="14" class="flip" /></b></div>
        </div>
        <div class="xs"><span class="ar">◂</span><span class="ar">▸</span><a href="#" class="on">Sheet1</a><a href="#">Sheet2</a><a href="#">Sheet3</a><Ico n="addc" :w="17" class="add" />
          <span class="vd">⋮</span><div class="xhs"><b>◂</b><i></i><b>▸</b></div></div>
        <div class="xst"><Ico n="rec" /><div class="views"><span class="on"><Ico n="vgrid" /></span><span><Ico n="vpage" /></span><span><Ico n="vbreak" /></span></div><span class="pm">−</span><input type="range" aria-label="Zoom" value="51"><span class="pm">+</span><span class="pc">100%</span></div>
      </div>

      <div class="np main">
        <div class="npt"><Ico n="note" :w="18" vb="0 0 40 40" /><span>Userrightsmaster company code and divisioncode - Notepad</span><div class="npw"><button aria-label="Minimize"><i class="wmin"></i></button><button aria-label="Maximize"><i class="wmax"></i></button><button aria-label="Close"><Ico n="x" :w="12" /></button></div></div>
        <div class="npin"><div class="npm"><span>File</span><span>Edit</span><span>Format</span><span>View</span><span>Help</span></div>
          <div class="npb"><div class="nptext"><div v-for="l in lines" :key="l">ibas;{{ l }}</div><div>ibas;DATELCOM INET;datelcom_logo.jpg;ibasdev;<mark>DAINT</mark>;DTELC</div></div>
            <div class="nvs"><Ico n="tri" :w="12" /><i>≡</i><Ico n="tri" :w="12" class="flip" /></div></div></div>
      </div>

      <div class="find">
        <div class="ft"><span>Find</span><button aria-label="Close"><Ico n="x" :w="12" /></button></div>
        <form @submit.prevent>
          <div class="fl"><div class="fw"><label for="fw">Fi<u>n</u>d what:</label><input id="fw" value="DAINT"></div>
            <div class="fb"><label class="mcs"><input type="checkbox"><span>Match <u>c</u>ase</span></label>
              <fieldset><legend>Direction</legend><label><input type="radio" name="dir"><span><u>U</u>p</span></label><label><input type="radio" name="dir" checked><span><u>D</u>own</span></label></fieldset></div></div>
          <div class="fbt"><button><u>F</u>ind Next</button><button>Cancel</button></div>
        </form>
      </div>
    </section>
  </div>
</template>

<style>
body { margin: 0; background: #fff; }
</style>
<style scoped>
* { box-sizing: border-box; }
button { font: inherit; color: inherit; background: none; border: 0; padding: 0; margin: 0; }
a { color: inherit; text-decoration: none; }
svg { flex: none; display: block; }
input, select, textarea { font: inherit; border-radius: 0; margin: 0; }
.flip { transform: rotate(180deg); }
.desk { display: flex; height: 100vh; font: 12px/16px "Open Sans", sans-serif; color: #444; overflow: hidden; }
.screen { flex: 1; min-width: 0; position: relative; display: flex; flex-direction: column; overflow: hidden; }
.wmin { width: 11px; height: 4px; background: #fff; border: 1px solid #445; display: block; }
.wmax { width: 11px; height: 10px; border: 3px double #445; background: #fff; display: block; }

.tabstrip { height: 34px; flex: none; display: flex; background: linear-gradient(#0000 45%, #a4ccf4 95%), linear-gradient(90deg, #94b8dc 0, #7fabd8 25%, #86b2de 29%, #1d2f42 31%, #16222f 41%, #50687e 44%, #4d667d 53%, #182736 56%, #233344 79%, #5a7089 84%, #a9c6e2 92%, #c4dbf0); }
.ctab { width: 242px; margin-left: 7px; background: #fff; border-radius: 6px 6px 0 0; display: flex; align-items: center; padding: 0 10px 0 14px; gap: 9px; color: #3c4043; }
.ctab span { flex: 1; white-space: nowrap; overflow: hidden; font-size: 11px; mask-image: linear-gradient(90deg, #000 88%, #0000); }
.newtab { width: 28px; height: 28px; border-radius: 50%; background: #dee1e6; margin: 3px 0 0 7px; display: grid; place-items: center; color: #3c4043; }
.smudge { width: 256px; height: 8px; margin: 12px 0 0 6px; background: #35557a; opacity: .4; filter: blur(4px); }
.wctl { margin-left: auto; margin-right: 3px; height: 18px; display: flex; border: 1px solid #333e4c; border-top: 0; border-radius: 0 0 5px 5px; overflow: hidden; }
.wctl button { width: 27px; display: grid; place-items: center; background: linear-gradient(#c6d3e0, #8199b2); border-right: 1px solid #445; }
.wctl .red { width: 47px; background: linear-gradient(#e0a396, #c34a34 50%, #d9694f); color: #fff; border: 0; }
.toolbar { height: 36px; flex: none; display: flex; align-items: center; padding-left: 13px; gap: 17px; color: #5f6368; }
.toolbar .dim { color: #bbb; }
.omni { flex: 1; height: 28px; margin-left: -3px; border-radius: 14px; background: #f1f3f4; display: flex; align-items: center; padding: 0 10px; gap: 9px; font-size: 13px; color: #5f6368; }
.ns { color: #c5221f; border-right: 1px solid #999; padding-right: 8px; }
.url { flex: 1; }
.url b { font-weight: 400; color: #202124; }
.exts { display: flex; align-items: center; gap: 16px; padding-right: 8px; margin-left: -3px; }
.uib { width: 16px; height: 16px; background: #2468b0; color: #fff; text-align: center; font-weight: 600; }
.av { width: 22px; height: 22px; line-height: 22px; margin-left: -2px; border-radius: 50%; background: #0097a7; color: #fff; text-align: center; }
.menu { width: 28px; height: 28px; margin-left: -9px; border-radius: 50%; background: #e0e0e0; display: grid; place-items: center; }
.marks { height: 33px; flex: none; display: flex; padding: 0 0 6px 14px; align-items: center; border-bottom: 1px solid #d5d5d5; color: #3c4043; }
.marks a { display: flex; gap: 7px; align-items: center; white-space: nowrap; }
.marks .apps { width: 67px; }
.crm { flex: 1; min-height: 0; border: 1px solid #2f6797; border-bottom: 3px solid #2f6797; display: flex; flex-direction: column; color: #999; }
.crmtabs { position: relative; margin: 2px 2px 0; height: 34px; flex: none; border: 1px solid #2f6797; border-right: 0; background: #8ab7dc; display: flex; align-items: flex-end; gap: 1px; padding-left: 2px; }
.wave { position: absolute; inset: 0; width: 100%; height: 100%; }
.crmtabs a { height: 28px; line-height: 28px; text-align: center; background: linear-gradient(#eef6fd, #dcecf9); color: #2f6797; font-weight: 600; z-index: 1; white-space: nowrap; border-right: 1px solid #a8c8e4; }
.crmtabs a.active { background: #f8f8f8; color: #e36f0a; margin-bottom: -1px; }
.crmtabs a.off { background: #9cc2e2; color: #5c93c2; }
h1 { margin: 0 0 0 22px; height: 42px; flex: none; line-height: 46px; font-size: 18px; font-weight: 300; color: #666; border-bottom: 1px solid #d8d8d8; }
.crmbar { height: 35px; flex: none; margin-left: 22px; border-bottom: 1px solid #d8d8d8; display: flex; align-items: center; padding-left: 12px; gap: 24px; color: #707070; }
.crmbar small { font-size: 10px; }
.form { display: flex; padding: 52px 0 0 28px; font-size: 12px; }
.fcol { width: 594px; display: flex; flex-direction: column; gap: 7px; }
.fr { display: flex; align-items: center; }
.fr label { width: 205px; flex: none; }
.fr.tall { align-items: flex-start; margin-bottom: -1px; }
.fr.tall label { padding-top: 4px; }
.fr.first { margin-top: 37px; }
.fr input, .fr textarea, .fr select { width: 312px; height: 22px; border: 1px solid #d6d7da; background: #f5f6f8; color: #999; padding: 0 2px; font-size: 11px; display: block; }
.fr textarea { height: 57px; resize: none; }
.fr select { height: 24px; background: #fff url("data:image/svg+xml,%3Csvg xmlns='http://www.w3.org/2000/svg' width='10' height='8'%3E%3Cpath d='M1 2l4 4 4-4' stroke='%23444' stroke-width='2' fill='none'/%3E%3C/svg%3E") no-repeat right 4px center; appearance: none; color: #555; padding-left: 6px; }
.fr .edit { background: #fff; color: #555; }
.fr svg { margin-left: 4px; }
.clr { margin-left: 2px; color: #888; }
.acts { display: flex; gap: 3px; margin: 13px 0 0 -2px; }
.acts button { width: 120px; height: 32px; border: 1px solid #d6d7da; color: #444; }
.acts .def { border: 2px solid #555; border-radius: 3px; }
.loader { width: 56px; height: 20px; margin: 22px 0 0 309px; background: linear-gradient(62deg, #5bc0de 12%, #74cae3 13% 40%, #5bc0de 41% 66%, #74cae3 67%); border-bottom: 1px solid #46a8c8; }
.foot { height: 52px; flex: none; display: flex; align-items: center; font: 10px/14px "Liberation Sans", sans-serif; color: #383184; position: relative; }
.cv { width: 433px; display: flex; gap: 0; padding-left: 2px; align-items: center; color: #333; }
.cv div { margin-left: -4px; }
.cv b { display: block; font: 600 20px/20px "Lato", sans-serif; }
.cv small { display: block; font: 9px/9px "Liberation Sans", sans-serif; color: #777; }
.ver { width: 849px; }
.sun { margin-left: auto; margin-right: 4px; display: flex; flex-direction: column; align-items: center; }
.sun b { font: 700 19px/16px "Open Sans", sans-serif; color: #111; }
.sun i { font-style: normal; color: #f7941d; }
.taskbar { height: 40px; flex: none; background: linear-gradient(90deg, #0a0f14, #10161d 20%, #0b1016 60%, #1c2028 75%, #0a0f14 90%); border-top: 1px solid #6d7684; display: flex; align-items: center; gap: 4px; }
.orb { width: 52px; margin-right: 2px; display: grid; place-items: center; }
.tb { width: 58px; height: 38px; display: grid; place-items: center; border: 1px solid #0000; border-radius: 3px; }
.tb.open, .tb.stack { border-color: #8a8f96; background: linear-gradient(120deg, #666b72, #3a3f46 50%, #22272d); }
.tb.front { background: linear-gradient(120deg, #e0e3e6, #a0a5aa 50%, #8a8f94); border-color: #fff; }
.tb.stack { box-shadow: inset -4px 0 #0a0f14, inset -5px 0 #8a8f96; padding-right: 7px; }
.uibig { width: 32px; height: 32px; background: #0067df; color: #fff; font: 600 18px/32px "Open Sans", sans-serif; }
.uibig.ui2 { background: #00419b; }
.ibas { width: 32px; height: 32px; border-radius: 6px; border: 2px solid #4ba146; background: linear-gradient(#fff, #cfeec0); color: #2b7a2b; font: 600 11px/28px "Open Sans", sans-serif; }
.tray { margin-left: auto; display: flex; align-items: center; gap: 7px; color: #fff; height: 100%; }
.clock { width: 66px; text-align: center; font-size: 12px; line-height: 17px; margin-left: 8px; }
.peek { width: 14px; height: 38px; border: 1px solid #777; background: linear-gradient(#6a6f76, #14181d 45%); }
.restore { position: absolute; top: 66px; right: 0; width: 545px; height: 173px; background: #fff; border: 1px solid #b5b5b5; border-radius: 2px; box-shadow: 0 2px 4px #0006; padding: 19px 16px; color: #202124; }
.rx { position: absolute; right: 9px; top: 9px; color: #5f6368; }
.restore h2 { margin: 0; font-size: 14px; line-height: 20px; font-weight: 400; }
.restore p { margin: 9px 0 22px; }
.restore label { display: flex; gap: 20px; align-items: center; color: #5f6368; white-space: nowrap; font-family: Roboto, sans-serif; }
.restore label input { appearance: none; width: 12px; height: 12px; margin-left: 1px; border: 1px solid #5f6368; background: #fff; }
.restore label a { color: #1a73e8; }
.rb { position: absolute; right: 16px; bottom: 15px; width: 73px; height: 32px; border-radius: 3px; background: #1a73e8; color: #fff; font-weight: 600; }

.iebar { height: 54px; flex: none; background: linear-gradient(#4a4b4e, #222326 50%, #38393c); border-bottom: 1px solid #111; display: flex; align-items: flex-end; gap: 6px; padding: 0 0 4px 2px; }
.iebar > svg { margin-bottom: 3px; }
.ieb { width: 36px; height: 34px; border-radius: 50%; background: #0f86cc; color: #fff; display: grid; place-items: center; }
.ief { width: 24px; height: 24px; border-radius: 50%; border: 1px solid #222; color: #ccc; display: grid; place-items: center; margin: 0 0 5px; }
.ier { margin-left: auto; width: 109px; align-self: stretch; display: flex; flex-direction: column; align-items: flex-end; justify-content: space-between; }
.iew { display: flex; height: 18px; width: 102px; border: 1px solid #777; border-radius: 0 0 4px 4px; border-top: 0; color: #fff; }
.iew button { flex: 1; display: grid; place-items: center; border-right: 1px solid #555; }
.iei { display: flex; gap: 9px; padding: 0 8px 4px 0; }
.docs { flex: 1; min-height: 0; display: flex; background: #fff; }
.docmain { flex: 1; min-width: 0; display: flex; flex-direction: column; }
.dochead { height: 59px; flex: none; display: flex; align-items: center; padding: 0 0 0 20px; border-bottom: 1px solid #dadce0; margin-right: -50px; }
.dt { margin-left: 20px; display: flex; flex-direction: column; gap: 8px; font-size: 14px; color: #222; }
.dshare { margin-left: auto; width: 120px; height: 32px; border-radius: 3px; background: #1e8e3e; color: #fff; text-align: right; padding-right: 14px; font: 600 14px/32px "Open Sans", sans-serif; }
.av.big { width: 29px; height: 29px; line-height: 29px; margin: 0 18px; font-size: 14px; }
.doctools { height: 35px; flex: none; border-bottom: 1px solid #dadce0; display: flex; align-items: center; gap: 9px; padding: 0 11px 0 31px; color: #555; }
.end { margin-left: auto; }
.docfx { height: 22px; flex: none; display: flex; align-items: center; gap: 16px; padding-left: 12px; color: #999; border-bottom: 1px solid #bbb; }
.docgrid { flex: 1; min-height: 0; display: flex; }
.gwrap { flex: 1; min-width: 0; overflow: hidden; }
table { border-collapse: separate; border-spacing: 0; table-layout: fixed; width: 100%; }
.docgrid td, .docgrid th { height: 19px; padding: 0 3px; border: solid #e0e0e0; border-width: 0 1px 1px 0; font: 12px/18px "Liberation Sans", sans-serif; color: #000; white-space: nowrap; overflow: hidden; }
.docgrid th { background: #f8f9fa; border-color: #c0c0c0; font-size: 11px; color: #777; }
.docgrid thead td { background: #f8f9fa; }
.docgrid thead tr:first-child > * { height: 22px; }
.docgrid .frz > * { height: 23px; border-bottom: 4px solid #bdbdbd; background: #fff; }
.vs { width: 16px; background: #f1f1f1; display: flex; flex-direction: column; align-items: center; padding: 58px 0 20px; color: #555; }
.vs i { width: 12px; height: 13px; background: #c8c8c8; margin: 6px 0 auto; }
.hs { height: 15px; flex: none; background: #f1f1f1; display: flex; align-items: center; border-right: 16px solid #fafafa; }
.hs i { flex: none; width: 1094px; height: 14px; background: #cbcbcb; }
.chev { width: 72px; padding-left: 54px; color: #555; }
.chev.r { margin-left: auto; width: 26px; padding-left: 0; }
.docfoot { height: 36px; flex: none; background: #f1f3f4; border-top: 1px solid #e0e0e0; display: flex; align-items: center; color: #555; gap: 14px; padding-left: 44px; }
.docfoot a { width: 86px; height: 35px; margin-left: 12px; background: #fff; color: #188038; border-right: 1px solid #ccc; text-align: center; line-height: 33px; }
.docfoot small { font-size: 8px; }
.expl { margin-left: auto; width: 94px; height: 35px; background: #fff; border-left: 1px solid #ccc; color: #0f9d58; display: flex; align-items: center; gap: 12px; padding-left: 10px; font-size: 11px; }
.side { width: 50px; border-left: 1px solid #dadce0; display: flex; flex-direction: column; align-items: center; padding: 78px 0 18px; gap: 34px; }
.side span { margin-top: auto; font-size: 20px; }

.np { position: absolute; border: 1px solid #5d6c70; border-radius: 6px; background: #e0f4f8b8; backdrop-filter: blur(4px); box-shadow: 0 0 6px #0004; display: flex; flex-direction: column; padding: 0 7px 7px; }
.np.under { left: 20px; top: 157px; width: 860px; height: 615px; }
.np.main { left: 21px; top: 246px; width: 907px; height: 616px; background: linear-gradient(90deg, #c8fafccc, #eaf4f5c8 30%, #dfe8eaa8 80%, #f6fbf2c0); }
.npt { height: 29px; flex: none; display: flex; align-items: center; gap: 4px; color: #000; white-space: nowrap; }
.main .npt > span { font-family: Roboto, sans-serif; }
.npw { margin-left: auto; align-self: flex-start; display: flex; height: 19px; border: 1px solid #72838c; border-top: 0; border-radius: 0 0 4px 4px; color: #445; background: #fff8; }
.npw button { width: 28px; display: grid; place-items: center; border-right: 1px solid #8a989f; }
.npw button:last-child { width: 46px; border: 0; }
.npin { flex: 1; min-height: 0; display: flex; flex-direction: column; border: 1px solid #6d7a80; background: #fff; }
.npm { height: 20px; flex: none; background: linear-gradient(#f5f7fc 45%, #d6dcee 50%, #dfe5f3); border-bottom: 1px solid #999; display: flex; gap: 14px; padding-left: 8px; align-items: center; color: #666; }
.npb { flex: 1; min-height: 0; display: flex; }
.nptext { flex: 1; padding: 1px 0 0 2px; font: 18px/19px "DejaVu Sans Mono", monospace; color: #000; white-space: pre; overflow: hidden; }
.under .nptext { padding-top: 2px; }
mark { background: #3399ff; color: #fff; }
.nvs { width: 17px; background: #f0f0f0; display: flex; flex-direction: column; align-items: center; padding: 3px 0; color: #444; }
.nvs i { width: 14px; height: 43px; margin: 70px 0 auto; border: 1px solid #888; border-radius: 2px; background: linear-gradient(90deg, #f6f6f6, #ccc); font: 12px/41px "Open Sans", sans-serif; text-align: center; }

.xl { position: absolute; left: 80px; right: 109px; top: 0; bottom: 138px; border: 1px solid #848484; background: #f3f2f1; display: flex; flex-direction: column; }
.xlt { height: 34px; flex: none; background: #217346; color: #a9d0b9; display: flex; align-items: center; padding-left: 23px; position: relative; gap: 20px; }
.as { width: 52px; margin-right: -14px; font-size: 11px; }
.tog { width: 38px; height: 16px; border: 1px solid #fff; border-radius: 8px; color: #fff; font-size: 10px; line-height: 14px; display: flex; align-items: center; gap: 5px; padding-left: 4px; margin-right: -6px; }
.tog input { position: absolute; opacity: 0; }
.tog i { width: 8px; height: 8px; border-radius: 50%; background: #fff; }
.pair { display: flex; align-items: center; margin-right: -8px; }
.faint { opacity: .4; margin-right: -6px; }
.ttl { flex: 1; text-align: center; padding-right: 66px; }
.xlu { display: flex; align-items: center; gap: 30px; padding-right: 15px; white-space: nowrap; }
.xlu span { margin-right: -18px; }
.xlu b { width: 24px; height: 24px; line-height: 24px; border-radius: 50%; background: #e3008c; color: #fff; text-align: center; font-weight: 400; font-size: 11px; margin-right: -4px; }
.xltabs { height: 32px; flex: none; display: flex; align-items: center; padding-left: 17px; }
.xltabs a { height: 28px; white-space: nowrap; }
.xltabs a span { display: inline-block; height: 28px; line-height: 26px; }
.xltabs .on span { border-bottom: 3px solid #217346; }
.xltabs > svg { margin-left: -1px; }
.sr { margin-left: 11px; }
.sc { margin-left: auto; display: flex; gap: 8px; padding-right: 13px; color: #217346; font-weight: 600; }
.sc button { height: 23px; padding: 0 6px; background: #fff; border: 1px solid #e1dfdd; border-radius: 2px; display: flex; gap: 2px; align-items: center; }
.rib { height: 94px; flex: none; display: flex; padding-top: 2px; border-bottom: 1px solid #d2d0ce; }
.g { height: 88px; flex: none; display: flex; flex-direction: column; border-right: 1px solid #c8c6c4; }
.g .body { height: 76px; display: flex; white-space: nowrap; }
.g .colm { flex-direction: column; padding-top: 8px; gap: 10px; }
.gl { display: flex; height: 14px; line-height: 14px; padding-right: 2px; align-items: center; font-size: 11px; white-space: nowrap; }
.gl span { flex: 1; text-align: center; }
.clip { width: 165px; } .font { width: 226px; } .align { width: 274px; } .num { width: 150px; } .styl { width: 381px; }
.cell { width: 143px; } .edit.g { width: 200px; } .idea { width: 58px; } .prot { width: 91px; }
.bigb { display: flex; flex-direction: column; align-items: center; padding-top: 4px; line-height: 16px; gap: 3px; flex: 1; font-size: 11px; }
.bigb small { font-size: 8px; }
.clip .bigb { flex: none; width: 50px; padding-left: 8px; }
.stk { display: flex; flex-direction: column; gap: 4px; padding-top: 4px; }
.stk button { height: 20px; display: flex; gap: 3px; align-items: center; font-size: 11px; }
.row { display: flex; align-items: center; height: 22px; padding-left: 8px; }
.row select { width: 124px; height: 22px; border: 1px solid #c8c6c4; padding: 0 3px; color: #333; appearance: none; background: #fff url("data:image/svg+xml,%3Csvg xmlns='http://www.w3.org/2000/svg' width='8' height='6'%3E%3Cpath d='M1 1l3 3 3-3' stroke='%23444' stroke-width='1.5' fill='none'/%3E%3C/svg%3E") no-repeat right 2px center; }
.row select.sz { width: 43px; margin-left: -1px; }
.num .row select { width: 134px; }
.big1 { font-size: 16px; margin-left: 5px; } .big2 { font-size: 14px; margin-left: 5px; }
.row sup { color: #1e7fd0; font-size: 9px; line-height: 1px; }
.tx { width: 22px; font-size: 14px; } .se { font-family: "Liberation Serif", serif; }
.row .sep { width: 1px; height: 22px; background: #c8c6c4; margin: 0 6px; }
.row .gap { width: 6px; }
.align .sep { margin: 0 3px; }
.align .sep.far { margin: 0 3px 0 13px; }
.ib { width: 22px; height: 22px; display: grid; place-items: center; }
.hi { background: #c8c6c4; }
.row button { display: flex; align-items: center; gap: 3px; }
.row .tx { justify-content: center; }
.align .row button { margin-left: 4px; font-size: 11px; }
.mc { margin-left: 8px; }
.dl { font-size: 16px; }
.styl .wide { flex: none; width: 92px; } .styl .wide2 { flex: none; width: 50px; }
.gal { width: 213px; height: 62px; margin: 5px 0 0; background: #fff; border: 1px solid #c8c6c4; display: grid; grid-template-columns: 108px 100px; grid-template-rows: 30px 27px; gap: 1px; }
.gal span { padding-left: 6px; line-height: 27px; color: #000; font-size: 12px; }
.gal .res { font: italic 700 13px/30px "Liberation Sans", sans-serif; text-decoration: underline; }
.gal .nor { border: 2px solid #bbb; margin-right: 2px; line-height: 22px; }
.gal .bad { background: #ffc7ce; color: #9c0006; margin: 2px 0; line-height: 22px; }
.gsc { width: 15px; height: 62px; margin-top: 5px; border: 1px solid #c8c6c4; }
.gsc i { height: 20px; display: grid; place-items: center; border-bottom: 1px solid #c8c6c4; }
.cell .body { padding: 0 6px; }
.edit .stk { width: 100px; padding-left: 10px; }
.coll { margin: auto 9px 1px auto; }
.msg { height: 31px; flex: none; background: #fcf7b6; border-bottom: 1px solid #d2cf92; display: flex; align-items: center; padding: 0 9px; gap: 10px; color: #444; white-space: nowrap; }
.msg b { font-weight: 400; color: #222; }
.expr { font-family: Roboto, sans-serif; }
.msg .info { width: 22px; height: 22px; line-height: 20px; border-radius: 50%; border: 1px solid #1e7fd0; color: #1e7fd0; text-align: center; font-size: 15px; background: #fff; }
.msg button { height: 21px; width: 109px; margin-left: 8px; border: 1px solid #ababab; background: #fdfdfd; }
.fbar { height: 46px; flex: none; background: #e6e6e6; display: flex; align-items: center; padding: 0 5px 0 5px; }
.nm { width: 102px; height: 25px; border: 1px solid #c3c3c3; background: #fff; display: flex; align-items: center; justify-content: space-between; padding: 0 5px; }
.nm small { font-size: 8px; color: #777; }
.vd { width: 31px; text-align: center; color: #999; }
.fxs { width: 109px; height: 25px; border: 1px solid #c3c3c3; background: #fff; display: flex; align-items: center; justify-content: space-around; color: #aaa; }
.fxs svg:last-child { color: #333; }
.fbar input { flex: 1; height: 25px; margin-left: 4px; border: 1px solid #c3c3c3; background: #fff; padding: 0 11px; color: #444; }
.xg { flex: 1; min-height: 0; display: flex; background: #e6e6e6; border-bottom: 1px solid #ababab; }
.xw { flex: 1; min-width: 0; overflow: hidden; border-right: 1px solid #999; }
.xg td, .xg th { height: 19px; padding: 0; border: solid #d0d0d0; border-width: 0 1px 1px 0; font: 15px/18px "Liberation Sans", sans-serif; color: #000; white-space: nowrap; overflow: hidden; background: #fff; }
.xg th { background: #e6e6e6; color: #222; }
.xg tbody th { vertical-align: bottom; border-right-color: #999; }
.xg thead th { border-bottom-color: #999; border-right-color: #bbb; }
.xg .corner { color: #bbb; font-size: 11px; text-align: right; }
.xg .r1 > * { height: 41px; vertical-align: bottom; }
.xg .r2 > * { height: 21px; }
.xg .yel > * { height: 21px; line-height: 20px; }
.xg td.cE { text-align: right; padding-right: 3px; }
.xg .r1 td.cE { padding-right: 26px; border-color: #fff; }
.xg .r2 td.cE { border-color: #fff; }
.xg .yel td.cE { background: #ff9; border-color: #ff9; }
.xg .r2 td.cF, .xg .r2 td.cG, .xg .sp td.cF { border-bottom-color: #fff; }
.xg .sp td.cF { border-right-color: #fff; }
.xvs { width: 22px; padding: 0 3px 0 4px; margin-top: 2px; display: flex; flex-direction: column; background: #e6e6e6; color: #555; }
.xvs b { height: 15px; border: 1px solid #ababab; background: #fff; display: grid; place-items: center; overflow: hidden; }
.xvs i { flex: 1; border: 1px solid #ababab; background: #fff; margin-bottom: 22px; }
.xs { height: 28px; flex: none; background: #e6e6e6; display: flex; align-items: center; padding-left: 16px; border-bottom: 1px solid #c6c6c6; }
.ar { width: 29px; color: #bbb; padding-left: 8px; }
.xs .ar + a { margin-left: 26px; }
.xs a { width: 65px; height: 22px; line-height: 20px; text-align: center; border-right: 1px solid #999; }
.xs a.on { height: 27px; line-height: 26px; background: #fff; color: #217346; font-weight: 700; border: 0; border-bottom: 2px solid #217346; }
.add { margin-left: 33px; margin-right: auto; }
.xhs { width: 654px; height: 15px; display: flex; margin-right: 21px; background: #d8d8d8; }
.xhs b { width: 15px; border: 1px solid #ababab; background: #fff; font-size: 11px; line-height: 13px; text-align: center; color: #555; }
.xhs i { flex: 1; border: 1px solid #ababab; background: #fff; margin-right: 43px; }
.xst { height: 21px; flex: none; display: flex; align-items: center; padding-left: 8px; color: #555; }
.views { margin-left: auto; display: flex; }
.views span { width: 40px; height: 21px; display: grid; place-items: center; }
.views .on { background: #c8c6c4; }
.pm { width: 18px; text-align: center; font-size: 14px; }
.xst input { width: 100px; height: 14px; appearance: none; background: linear-gradient(#999, #999) center / 100% 1px no-repeat; }
.xst input::-webkit-slider-thumb { appearance: none; width: 5px; height: 12px; background: #666; }
.pc { width: 62px; padding-right: 10px; text-align: center; font-size: 11px; }

.find { position: absolute; left: 76px; top: 415px; width: 368px; height: 138px; border: 1px solid #5d6c70; border-radius: 6px; background: #d9eef6a8; backdrop-filter: blur(4px); box-shadow: 0 1px 8px #0007; padding: 0 6px 6px; display: flex; flex-direction: column; color: #111; font-size: 11px; }
.ft { height: 28px; flex: none; display: flex; align-items: center; font-size: 12px; }
.ft button { margin-left: auto; align-self: flex-start; width: 45px; height: 19px; border: 1px solid #72838c; border-top: 0; border-radius: 0 0 4px 4px; display: grid; place-items: center; color: #445; background: #fff8; }
.find form { flex: 1; background: #f0f0f0; border: 1px solid #7d8c92; display: flex; padding: 10px 6px 0; justify-content: space-between; }
.fw { display: flex; align-items: center; justify-content: space-between; font-size: 10px; }
.fl { width: 257px; }
.fw input { width: 192px; height: 20px; border: 1px solid #abadb3; padding: 0 2px; background: #fff; font-size: 11px; }
.fb { display: flex; justify-content: space-between; align-items: flex-end; margin-top: 8px; }
.fb label { display: flex; align-items: center; gap: 4px; }
.fb input { width: 12px; height: 12px; }
.mcs { padding-bottom: 1px; }
fieldset { width: 101px; height: 47px; margin: 0; border: 1px solid #d5dfe5; border-radius: 3px; padding: 4px 4px 0; display: flex; gap: 12px; }
legend { padding: 0 2px; line-height: 16px; }
fieldset label { height: 18px; }
.fbt { display: flex; flex-direction: column; gap: 8px; margin-top: -1px; }
.fbt button { width: 73px; height: 21px; border: 1px solid #707070; border-radius: 3px; background: linear-gradient(#f2f2f2, #ddd 50%, #cfcfcf); }
</style>
